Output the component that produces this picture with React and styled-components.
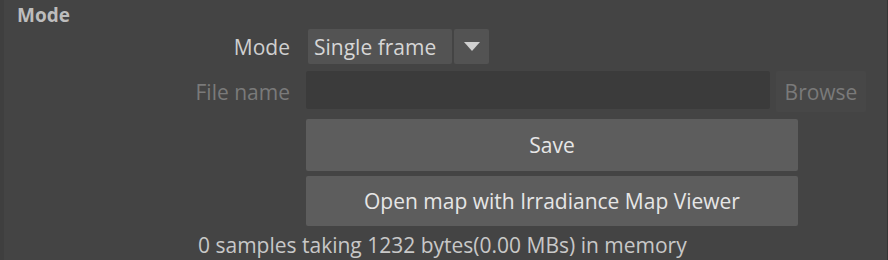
import React from 'react'
import styled, { createGlobalStyle } from 'styled-components'

const Global = createGlobalStyle`
  html, body {
    margin: 0;
    padding: 0;
    background: #444444;
  }
  body {
    font-family: "Open Sans", "Noto Sans", sans-serif;
  }
`

const Panel = styled.div`
  width: 888px;
  height: 260px;
  box-sizing: border-box;
  background: #444444;
  border-left: 4px solid #3f3f3f;
  border-right: 1px solid #353535;
  overflow: hidden;
  display: flex;
  flex-direction: column;
`

const Header = styled.div`
  height: 29px;
  padding-left: 13px;
  display: flex;
  align-items: center;
  font-size: 19px;
  font-weight: 700;
  color: #bdbdbd;
`

const Row = styled.div`
  display: flex;
  align-items: ${p => p.$align || 'center'};
  margin-top: ${p => p.$top || 0}px;
  height: ${p => p.$h}px;
`

const Label = styled.div`
  width: 302px;
  height: ${p => p.$h}px;
  flex-shrink: 0;
  display: flex;
  align-items: center;
  justify-content: flex-end;
  padding-right: 16px;
  box-sizing: border-box;
  font-size: 21px;
  color: ${p => (p.$dim ? '#7a7a7a' : '#cfcfcf')};
`

const Select = styled.div`
  display: flex;
  height: 35px;
  gap: 2px;
  margin-left: 2px;
`

const SelectValue = styled.div`
  width: 144px;
  background: #535353;
  color: #d6d6d6;
  font-size: 21px;
  padding-left: 6px;
  box-sizing: border-box;
  display: flex;
  align-items: center;
  border-radius: 2px;
`

const SelectArrow = styled.div`
  width: 35px;
  background: #535353;
  display: flex;
  align-items: center;
  justify-content: center;
  border-radius: 2px;
`

const Field = styled.div`
  width: 464px;
  height: 38px;
  background: #3b3b3b;
  border-radius: 2px;
`

const Browse = styled.div`
  width: 90px;
  height: 41px;
  margin-left: 6px;
  background: #474747;
  color: #7a7a7a;
  font-size: 21px;
  display: flex;
  align-items: center;
  justify-content: center;
  border-radius: 2px;
`

const Button = styled.div`
  margin-left: 302px;
  width: 492px;
  height: ${p => p.$h}px;
  margin-top: ${p => p.$top}px;
  background: #5d5d5d;
  color: #e6e6e6;
  font-size: 21px;
  display: flex;
  align-items: center;
  justify-content: center;
  border-radius: 2px;
`

const Status = styled.div`
  margin-top: 6px;
  padding-left: 194px;
  font-size: 21px;
  color: #c8c8c8;
  line-height: 26px;
`

export default function App() {
  return (
    <>
      <Global />
      <Panel>
        <Header>Mode</Header>
        <Row $h={35}>
          <Label $h={35}>Mode</Label>
          <Select>
            <SelectValue>Single frame</SelectValue>
            <SelectArrow>
              <svg width="16" height="10" viewBox="0 0 16 10">
                <path d="M0 0 L16 0 L8 9 Z" fill="#d0d0d0" />
              </svg>
            </SelectArrow>
          </Select>
        </Row>
        <Row $h={41} $top={7} $align="flex-start">
          <Label $dim $h={41}>File name</Label>
          <Field />
          <Browse>Browse</Browse>
        </Row>
        <Button $h={52} $top={7}>Save</Button>
        <Button $h={50} $top={5}>Open map with Irradiance Map Viewer</Button>
        <Status>0 samples taking 1232 bytes(0.00 MBs) in memory</Status>
      </Panel>
    </>
  )
}
